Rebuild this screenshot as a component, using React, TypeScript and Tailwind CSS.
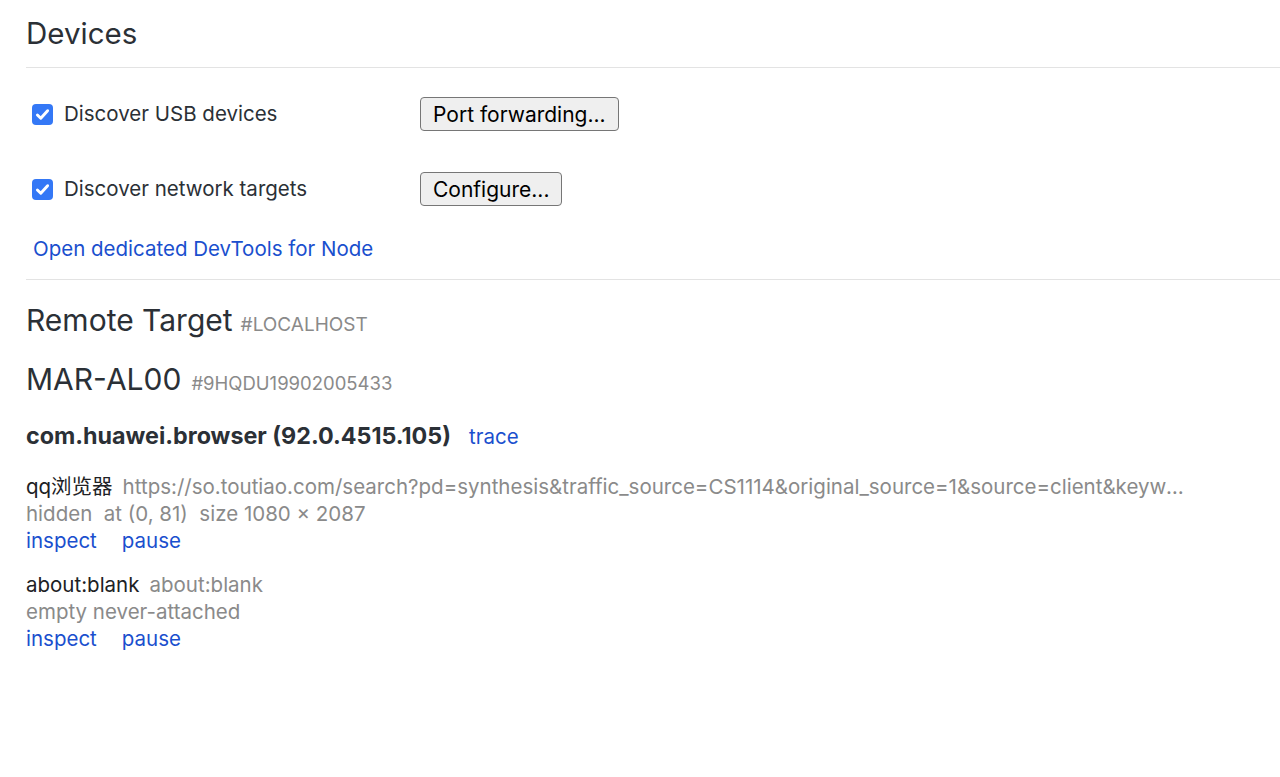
const font = { fontFamily: 'Inter, "Noto Sans CJK SC", sans-serif' };

function Checkbox() {
  return (
    <span className="flex h-[21px] w-[21px] items-center justify-center rounded-[4px] bg-[#3478f6]">
      <svg viewBox="0 0 20 20" className="h-[17px] w-[17px]" fill="none">
        <path d="M4 10.5l4 4 8-9" stroke="white" strokeWidth={3.4} strokeLinecap="round" strokeLinejoin="round" />
      </svg>
    </span>
  );
}

function Button({ label }: { label: string }) {
  return (
    <button className="h-[34px] rounded-[4px] border border-[#767676] bg-[#efefef] px-[12px] text-[21px] text-black leading-none">
      {label}
    </button>
  );
}

function Target({ name, url, status, truncate }: { name: string; url: string; status: string; truncate?: boolean }) {
  return (
    <div className="text-[20.5px] leading-[27px]">
      <div className="flex gap-[10px] whitespace-nowrap">
        <span className="text-[#202124]">{name}</span>
        <span className={`text-[#8a8a8a] ${truncate ? 'w-[1068px] overflow-hidden text-ellipsis' : ''}`}>{url}</span>
      </div>
      <div className="text-[#8a8a8a] whitespace-pre">{status}</div>
      <div className="flex gap-[25px] text-[#1a4fce]">
        <span>inspect</span>
        <span>pause</span>
      </div>
    </div>
  );
}

export default function App() {
  return (
    <div className="min-h-[777px] bg-white pl-[26px] text-[#202124]" style={font}>
      <h1 className="pt-[13px] pb-[14px] text-[29.5px] leading-[40px] text-[#2b3036]">Devices</h1>
      <div className="h-px bg-[#e3e3e3]" />

      <div className="pl-[6px]">
        <div className="mt-[29px] flex items-center h-[34px]">
          <div className="flex w-[388px] items-center gap-[11px]">
            <Checkbox />
            <span className="text-[20.5px] text-[#2b3036]">Discover USB devices</span>
          </div>
          <Button label="Port forwarding..." />
        </div>
        <div className="mt-[41px] flex items-center h-[34px]">
          <div className="flex w-[388px] items-center gap-[11px]">
            <Checkbox />
            <span className="text-[20.5px] text-[#2b3036]">Discover network targets</span>
          </div>
          <Button label="Configure..." />
        </div>
        <div className="mt-[27px] pl-px text-[20.5px] leading-[32px] text-[#1a4fce]">Open dedicated DevTools for Node</div>
      </div>

      <div className="mt-[14px] h-px bg-[#e3e3e3]" />

      <div className="mt-[20px] flex items-baseline gap-[8px]">
        <span className="text-[30px] leading-[40px] text-[#2b3036]">Remote Target</span>
        <span className="text-[19px] text-[#8a8a8a]">#LOCALHOST</span>
      </div>

      <div className="mt-[19px] flex items-baseline gap-[10px]">
        <span className="text-[30px] leading-[40px] text-[#2b3036]">MAR-AL00</span>
        <span className="text-[18.5px] text-[#8a8a8a]">#9HQDU19902005433</span>
      </div>

      <div className="mt-[21px] flex items-baseline gap-[18px]">
        <span className="text-[23.3px] font-bold leading-[32px] text-[#2b3036]">com.huawei.browser (92.0.4515.105)</span>
        <span className="text-[20.5px] text-[#1a4fce]">trace</span>
      </div>

      <div className="mt-[20px]">
        <Target
          name="qq浏览器"
          url="https://so.toutiao.com/search?pd=synthesis&traffic_source=CS1114&original_source=1&source=client&keyword=%E4%BB%8A%E6%97%A5%E5%A4%B4%E6%9D%A1"
          status={'hidden  at (0, 81)  size 1080 × 2087'}
          truncate
        />
      </div>
      <div className="mt-[17px]">
        <Target name="about:blank" url="about:blank" status="empty never-attached" />
      </div>
    </div>
  );
}
